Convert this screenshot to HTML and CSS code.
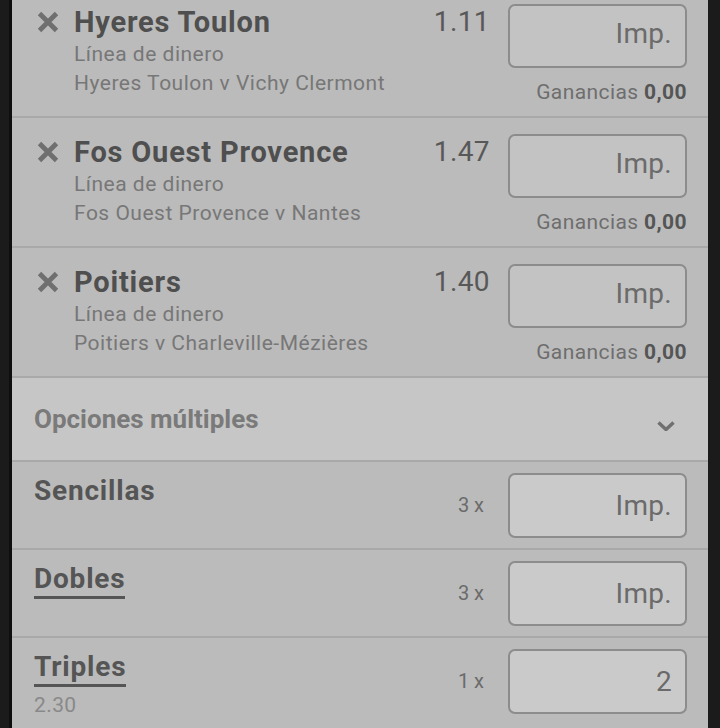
FILE: index.html
```html
<!DOCTYPE html>
<html lang="es">
<head>
    <meta charset="UTF-8">
    <meta name="viewport" content="width=device-width, initial-scale=1.0">
    <title>Boleto de apuestas</title>
    <link rel="stylesheet" href="styles.css">
</head>
<body>
    <div class="slip">
        <div class="bets">
            <div class="bet">
                <svg class="remove" viewBox="0 0 22 22"><path d="M2.5 2.5 L19.5 19.5 M19.5 2.5 L2.5 19.5"/></svg>
                <div class="bet-info">
                    <div class="bet-name">Hyeres Toulon</div>
                    <div class="bet-market">Línea de dinero</div>
                    <div class="bet-market">Hyeres Toulon v Vichy Clermont</div>
                </div>
                <div class="bet-odds">1.11</div>
                <div class="bet-stake">
                    <input class="stake" type="text" placeholder="Imp.">
                    <div class="returns">Ganancias <b>0,00</b></div>
                </div>
            </div>

            <div class="bet">
                <svg class="remove" viewBox="0 0 22 22"><path d="M2.5 2.5 L19.5 19.5 M19.5 2.5 L2.5 19.5"/></svg>
                <div class="bet-info">
                    <div class="bet-name">Fos Ouest Provence</div>
                    <div class="bet-market">Línea de dinero</div>
                    <div class="bet-market">Fos Ouest Provence v Nantes</div>
                </div>
                <div class="bet-odds">1.47</div>
                <div class="bet-stake">
                    <input class="stake" type="text" placeholder="Imp.">
                    <div class="returns">Ganancias <b>0,00</b></div>
                </div>
            </div>

            <div class="bet">
                <svg class="remove" viewBox="0 0 22 22"><path d="M2.5 2.5 L19.5 19.5 M19.5 2.5 L2.5 19.5"/></svg>
                <div class="bet-info">
                    <div class="bet-name">Poitiers</div>
                    <div class="bet-market">Línea de dinero</div>
                    <div class="bet-market">Poitiers v Charleville-Mézières</div>
                </div>
                <div class="bet-odds">1.40</div>
                <div class="bet-stake">
                    <input class="stake" type="text" placeholder="Imp.">
                    <div class="returns">Ganancias <b>0,00</b></div>
                </div>
            </div>
        </div>

        <div class="multi-toggle">
            <span>Opciones múltiples</span>
            <svg class="chevron" viewBox="0 0 18 10"><polyline points="1.5,1.5 9,8.5 16.5,1.5"/></svg>
        </div>

        <div class="multi-row">
            <div class="multi-info">
                <span class="multi-name">Sencillas</span>
            </div>
            <span class="multi-count">3 x</span>
            <input class="stake stake-light" type="text" placeholder="Imp.">
        </div>

        <div class="multi-row">
            <div class="multi-info">
                <span class="multi-name linked">Dobles</span>
            </div>
            <span class="multi-count">3 x</span>
            <input class="stake stake-light" type="text" placeholder="Imp.">
        </div>

        <div class="multi-row">
            <div class="multi-info">
                <span class="multi-name linked">Triples</span>
                <div class="multi-odds">2.30</div>
            </div>
            <span class="multi-count">1 x</span>
            <input class="stake stake-light" type="text" value="2">
        </div>
    </div>
</body>
</html>
```

FILE: styles.css
```css
body {
    margin: 0;
    padding: 0;
    background-color: #1b1b1b;
    font-family: Roboto, "Liberation Sans", sans-serif;
    overflow: hidden;
}
.slip {
    margin: 0 12px;
    background-color: #bbbbbb;
    box-shadow: -3px 0 0 #0e0e0e;
    height: 100vh;
    overflow: hidden;
}
.bets {
    margin-top: -12px;
}
.bet {
    display: flex;
    padding: 16px 21px 9px 25px;
    border-bottom: 2px solid #a9a9a9;
}
.remove {
    width: 22px;
    height: 22px;
    margin-top: 7px;
    flex-shrink: 0;
}
.remove path {
    stroke: #6f6f6f;
    stroke-width: 4.8;
    fill: none;
}
.bet-info {
    flex: 1;
    margin-left: 15px;
}
.bet-name {
    font-size: 29px;
    font-weight: bold;
    letter-spacing: 0.8px;
    line-height: 36px;
    color: #4f4f4f;
}
.bet-market {
    font-size: 21px;
    letter-spacing: 0.5px;
    line-height: 29px;
    color: #777;
}
.bet-odds {
    font-size: 28px;
    letter-spacing: 0.4px;
    line-height: 36px;
    color: #585858;
    margin-right: 18px;
}
.bet-stake {
    width: 179px;
    text-align: right;
}
.stake {
    box-sizing: border-box;
    width: 179px;
    height: 64px;
    margin: 0;
    padding: 0 13px 6px 13px;
    border: 2px solid #8c8c8c;
    border-radius: 7px;
    background-color: #c3c3c3;
    font-family: Roboto, "Liberation Sans", sans-serif;
    font-size: 28px;
    letter-spacing: 0.3px;
    color: #6a6a6a;
    text-align: right;
    outline: none;
}
.stake::placeholder {
    color: #6b6b6b;
    opacity: 1;
}
.stake-light {
    height: 65px;
    padding-bottom: 0;
    background-color: #cacaca;
}
.returns {
    margin-top: 10px;
    font-size: 21px;
    letter-spacing: 0.4px;
    line-height: 29px;
    color: #6e6e6e;
}
.returns b {
    color: #555;
}
.multi-toggle {
    display: flex;
    align-items: center;
    justify-content: space-between;
    height: 82px;
    padding: 0 33px 0 22px;
    background-color: #c6c6c6;
    border-bottom: 2px solid #a9a9a9;
    font-size: 26px;
    font-weight: bold;
    color: #7a7a7a;
}
.chevron {
    width: 18px;
    height: 10px;
    margin-top: 14px;
}
.chevron polyline {
    stroke: #707070;
    stroke-width: 3.5;
    fill: none;
}
.multi-row {
    display: flex;
    align-items: flex-start;
    height: 88px;
    padding: 11px 21px 0 22px;
    box-sizing: border-box;
    border-bottom: 2px solid #a9a9a9;
}
.multi-row:last-child {
    border-bottom: none;
}
.multi-info {
    flex: 1;
    padding-top: 1px;
}
.multi-name {
    display: inline-block;
    font-size: 28px;
    font-weight: bold;
    letter-spacing: 0.8px;
    line-height: 34px;
    color: #555;
}
.multi-name.linked {
    border-bottom: 3px solid #555;
}
.multi-odds {
    font-size: 21px;
    letter-spacing: 0.4px;
    line-height: 36px;
    color: #898989;
}
.multi-count {
    font-size: 20px;
    line-height: 65px;
    color: #6b6b6b;
    margin-right: 24px;
}
```
